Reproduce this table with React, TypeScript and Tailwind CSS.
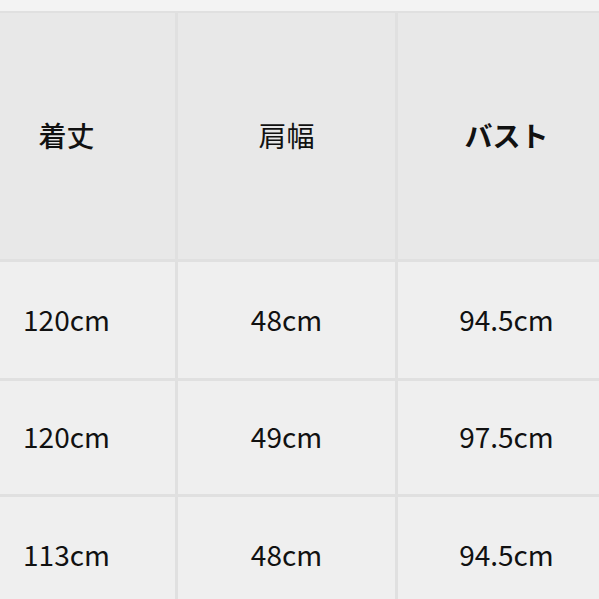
import React from "react";

const headers = [
  { label: "着丈", cls: "font-medium" },
  { label: "肩幅", cls: "font-normal" },
  { label: "バスト", cls: "font-bold" },
];

const rows = [
  { h: "h-[116px]", cells: ["120cm", "48cm", "94.5cm"] },
  { h: "h-[113px]", cells: ["120cm", "49cm", "97.5cm"] },
  { h: "h-[116px]", cells: ["113cm", "48cm", "94.5cm"] },
];

export default function App() {
  return (
    <div
      className="w-[599px] h-[599px] overflow-hidden bg-[#f2f2f2] text-[#111111]"
      style={{ fontFamily: '"Noto Sans CJK JP", "Noto Sans", sans-serif' }}
    >
      <div className="h-[11px] bg-[#f3f3f3]" />
      <div className="h-[2px] bg-[#e0e0e0]" />
      <div className="ml-[-42px] w-[657px] grid grid-cols-[217px_217px_217px] gap-[3px] bg-[#e0e0e0]">
        {headers.map((h) => (
          <div
            key={h.label}
            className={`h-[246px] bg-[#e8e8e8] flex items-center justify-center text-[28px] leading-none pb-[2px] ${h.cls}`}
          >
            {h.label}
          </div>
        ))}
        {rows.map((r, i) =>
          r.cells.map((c, j) => (
            <div
              key={`${i}-${j}`}
              className={`${r.h} bg-[#efefef] flex items-center justify-center text-[28px] leading-none pb-[3px]`}
            >
              {c}
            </div>
          ))
        )}
      </div>
    </div>
  );
}
